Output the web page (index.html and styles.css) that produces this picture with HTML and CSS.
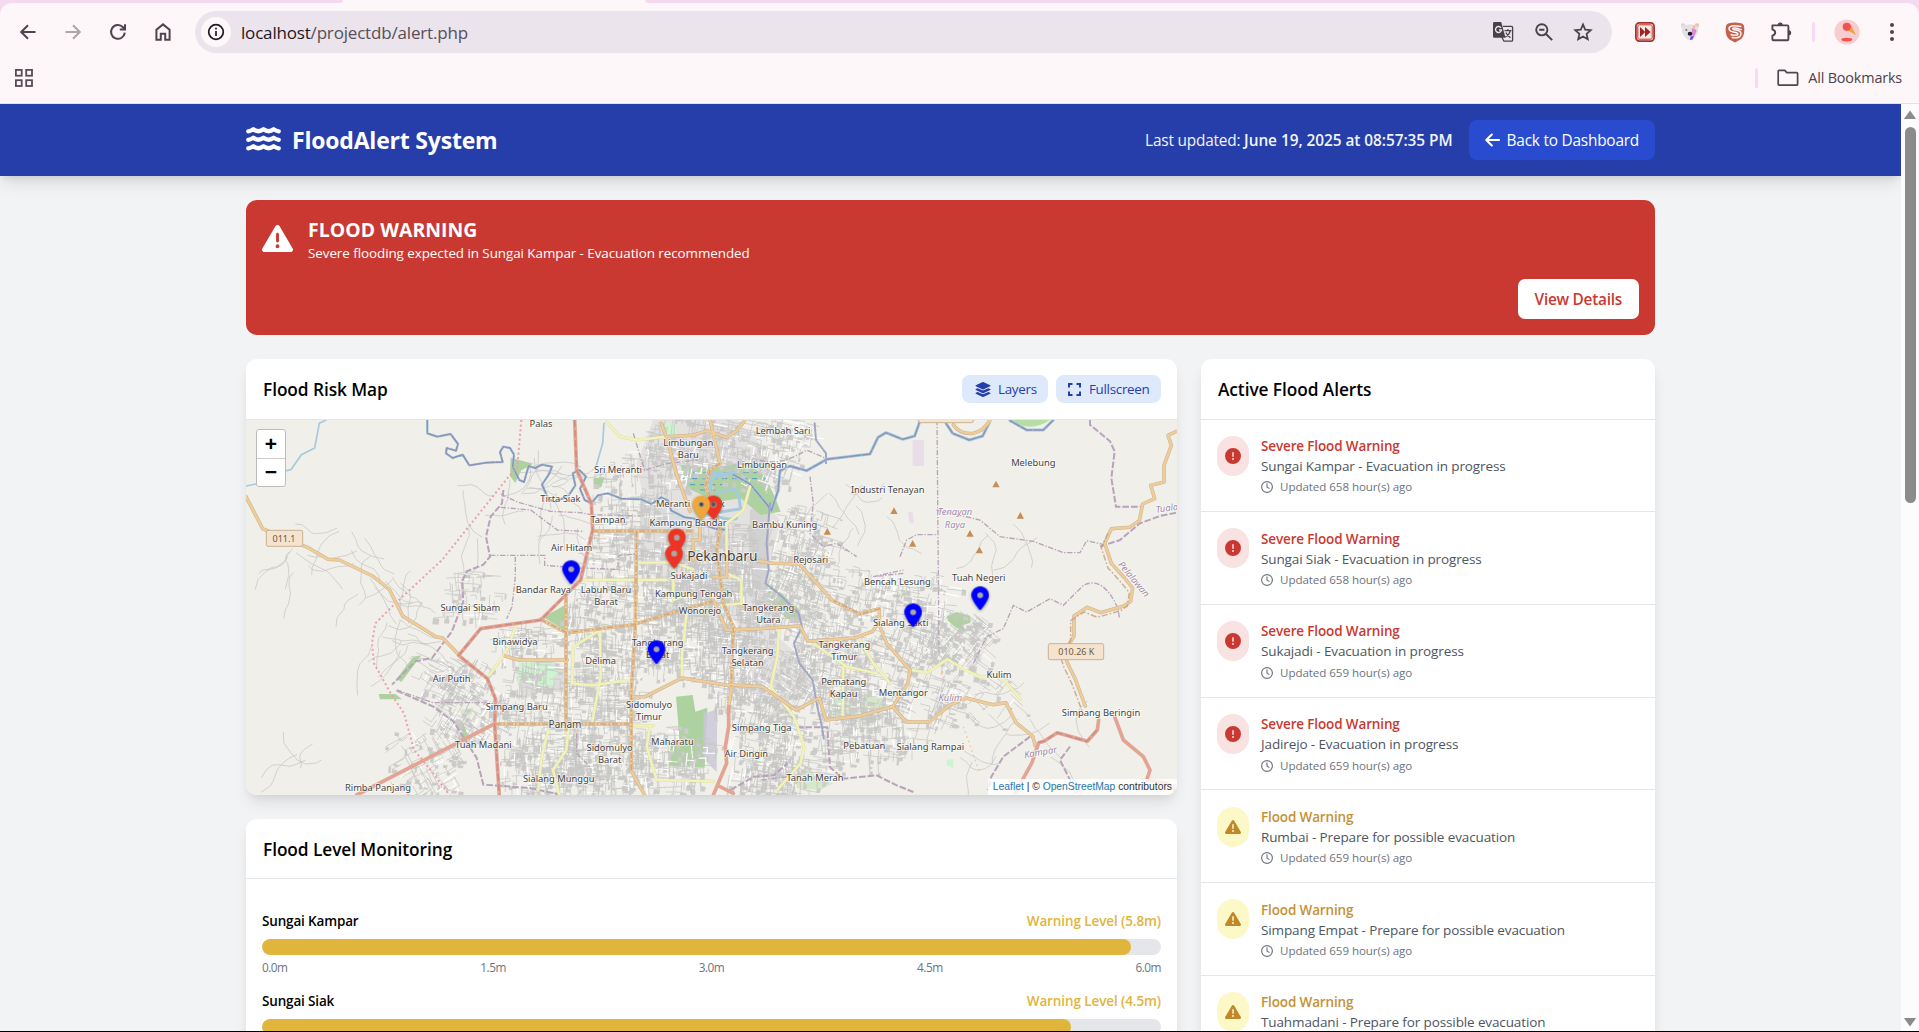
FILE: index.html
```html
<!DOCTYPE html>
<html lang="en">
<head>
<meta charset="utf-8">
<title>FloodAlert System</title>
<link rel="stylesheet" href="styles.css">
</head>
<body>
<svg class="defs" aria-hidden="true">
  <symbol id="i-triangle" viewBox="0 0 512 512"><path d="M256 32c14.2 0 27.3 7.5 34.5 19.8l216 368c7.3 12.4 7.3 27.7 .2 40.1S486.3 480 472 480H40c-14.3 0-27.6-7.7-34.7-20.1s-7-27.8 .2-40.1l216-368C228.7 39.5 241.8 32 256 32zm0 128c-13.3 0-24 10.7-24 24V296c0 13.3 10.7 24 24 24s24-10.7 24-24V184c0-13.3-10.7-24-24-24zm32 224a32 32 0 1 0 -64 0 32 32 0 1 0 64 0z"/></symbol>
  <symbol id="i-circle" viewBox="0 0 512 512"><path d="M256 512A256 256 0 1 0 256 0a256 256 0 1 0 0 512zm0-384c13.3 0 24 10.7 24 24V264c0 13.3-10.7 24-24 24s-24-10.7-24-24V152c0-13.3 10.7-24 24-24zM224 352a32 32 0 1 1 64 0 32 32 0 1 1 -64 0z"/></symbol>
  <symbol id="i-clock" viewBox="0 0 12 12"><g fill="none" stroke="currentColor" stroke-width="1.15" stroke-linecap="round" stroke-linejoin="round"><circle cx="6" cy="6" r="5.4"/><path d="M6 2.9V6l2 1.4"/></g></symbol>
  <symbol id="i-pin" viewBox="0 0 384 512"><circle cx="192" cy="192" r="75" fill="#a9a9a9"/><path d="M215.7 499.2C267 435 384 279.4 384 192C384 86 298 0 192 0S0 86 0 192c0 87.4 117 243 168.3 307.2c12.3 15.3 35.1 15.3 47.4 0zM192 128a64 64 0 1 1 0 128 64 64 0 1 1 0-128z"/></symbol>
</svg>

<div class="browser">
  <div class="tabstrip"><span class="tab-left"></span><span class="tab-active"></span><span class="tab-right"></span></div>
  <div class="toolbar">
    <div class="nav">
      <svg width="20" height="20" viewBox="0 0 20 20"><path d="M17.5 10H3.5M10 3.2 3.2 10l6.8 6.8"/></svg>
      <svg class="off" width="20" height="20" viewBox="0 0 20 20"><path d="M2.5 10h14M10 3.2l6.8 6.8-6.8 6.8"/></svg>
      <svg width="20" height="20" viewBox="0 0 20 20"><path d="M16.8 10.6A6.9 6.9 0 1 1 15 5.2l1.8 1.9M17 2.2v5.2h-5.2"/></svg>
      <svg width="20" height="20" viewBox="0 0 20 20"><path d="M3.4 17.8V7.8L10 2.4l6.6 5.4v10h-4.4v-6H7.8v6z"/></svg>
    </div>
    <div class="omnibox">
      <span class="site-info"><svg width="18" height="18" viewBox="0 0 18 18"><g fill="none" stroke="#1f1a20" stroke-width="1.7"><circle cx="9" cy="9" r="7.3"/><path d="M9 8v5M9 4.8v1.8"/></g></svg></span>
      <span class="url"><b>localhost</b>/projectdb/alert.php</span>
      <svg class="o-translate" width="22" height="22" viewBox="0 0 22 22"><path fill="none" stroke="#494149" stroke-width="1.3" d="M11 5.4h8.6q1 0 1 1v12.8q0 1-1 1H12l-2.2-4"/><path fill="#494149" d="M2.4 1h6.800l4.300 15.800H2.400q-1.400 0-1.400-1.400V2.400Q1 1 2.400 1z"/><path fill="none" stroke="#ebe4ec" stroke-width="1.4" d="M9 6.800A3 3 0 1 0 9.500 9H7"/><path fill="none" stroke="#494149" stroke-width="1.2" d="M12.500 9.600h7M15.900 8v1.600M18.300 9.800q-1 4-5 6.200M13.800 11.600q1.600 3.400 4.600 5"/></svg>
      <svg class="o-zoom" width="20" height="20" viewBox="0 0 20 20"><g fill="none" stroke="#494149" stroke-width="1.9"><circle cx="7.800" cy="7.800" r="5.600"/><path d="M12 12l6.200 6.200M5.200 7.800h5.200"/></g></svg>
      <svg class="o-star" width="20" height="20" viewBox="0 0 20 20"><path fill="none" stroke="#494149" stroke-width="1.7" d="M10 2.400l2.200 5.200 5.600.5-4.200 3.700 1.200 5.500L10 14.400l-4.800 2.900 1.200-5.500-4.200-3.700 5.600-.5z"/></svg>
    </div>
    <div class="ext">
      <svg width="20" height="20" viewBox="0 0 20 20"><rect x=".9" y=".9" width="18.2" height="18.2" rx="3.5" fill="#fff" stroke="#a8322b" stroke-width="1.8"/><rect x="2.8" y="2.8" width="14.4" height="14.4" rx="1.5" fill="#f6e6e4" stroke="#b5342b" stroke-width="1"/><path fill="#9c261f" d="M5 5l5.200 5L5 15zM10 5l5.600 5-5.600 5z"/></svg>
      <svg width="20" height="20" viewBox="0 0 20 20"><circle cx="3.2" cy="3.600" r="2.300" fill="#dcd8da"/><circle cx="16.800" cy="3.600" r="2.300" fill="#ecc0ac"/><path fill="#e4e0e4" d="M2.500 4q7.500-3.500 15 0 2 6-1.500 9.500-2.500 4.500-6 4.500t-6-4.500Q.5 10 2.500 4z"/><path fill="#df8ad6" d="M12 6q4 .6 4.500 3-1 4-3.500 6l-1.500-4z"/><path fill="#6a4be0" d="M10.500 14.500l3.500-.5-1.500 3.500-2.500.5z"/><path fill="#f0a060" d="M13 3.600l2.400.8-1 2z"/><circle cx="6.300" cy="8" r="1" fill="#777"/><ellipse cx="10" cy="11.800" rx="2.300" ry="2" fill="#201b26"/></svg>
      <svg width="20" height="21" viewBox="0 0 20 21"><path fill="#c4604a" d="M4 1.200Q10-.4 16 1.200q3 .8 3.200 4Q20 14 15.500 17.500L10 20.600l-5.500-3.100Q0 14 .8 5.200q.2-3.200 3.200-4z"/><path fill="none" stroke="#fdf7fa" stroke-width="1.5" stroke-linecap="round" d="M15.800 4.600Q4 2.400 4 6.600q0 3 5.500 3.600 3.400.4 3.400 1.900 0 2.200-6.800.6M16.200 7.600Q8 5 7.800 6.700q0 .9 3.200 1.200 5 .6 5 3.900 0 5-8.800 3.600"/></svg>
      <svg width="22" height="22" viewBox="0 0 22 22"><path fill="none" stroke="#4f4350" stroke-width="1.9" stroke-linejoin="round" d="M2.400 4.400h15q1 0 1 1v12.800q0 1-1 1H3.400q-1 0-1-1v-3.600q2.800-.6 2.800-3t-2.800-3z"/><path fill="#4f4350" d="M7.600 4a2.600 2.600 0 0 1 5.200 0zM18.600 9.200a2.600 2.600 0 0 1 0 5.200z"/></svg>
    </div>
    <span class="sep"></span>
    <svg class="avatar" width="26" height="26" viewBox="0 0 26 26"><circle cx="13" cy="13" r="12.600" fill="#f7cdd1"/><path fill="#f0a23c" d="M12.500 10.500l4.500-4.500 4.800 10z"/><circle cx="12.800" cy="7.800" r="4.100" fill="#f0544c"/><ellipse cx="12.800" cy="20.600" rx="5.400" ry="1.900" fill="#f0544c"/></svg>
    <svg class="kebab" width="6" height="20" viewBox="0 0 6 20"><g fill="#4f4350"><circle cx="3" cy="3" r="2"/><circle cx="3" cy="10" r="2"/><circle cx="3" cy="17" r="2"/></g></svg>
  </div>
  <div class="bookmarks">
    <svg width="18" height="18" viewBox="0 0 18 18"><g fill="none" stroke="#574b55" stroke-width="1.8"><rect x=".9" y=".9" width="5.800" height="5.800"/><rect x="11.200" y=".9" width="5.800" height="5.800"/><rect x=".9" y="11.200" width="5.800" height="5.800"/><rect x="11.200" y="11.200" width="5.800" height="5.800"/></g></svg>
    <span class="sep"></span>
    <svg class="folder" width="22" height="18" viewBox="0 0 22 18"><path fill="none" stroke="#4f4750" stroke-width="1.7" stroke-linejoin="round" d="M1.200 2.400q0-1 1-1h5.600l2 2.200h9.800q1 0 1 1v10.600q0 1-1 1H2.200q-1 0-1-1z"/></svg>
    <span class="all">All Bookmarks</span>
  </div>
</div>

<div class="viewport">
  <div class="page">
    <header class="site-header">
      <div class="container header-row">
        <svg class="waves" width="35" height="24" viewBox="0 0 35 24"><g fill="none" stroke="#fff" stroke-width="4.3" stroke-linecap="round" stroke-linejoin="round"><path d="M2.300 4.300q2.400-.3 5-2 5 3.800 10.200 0 5.200 3.800 10.200 0 2.600 1.700 5 2"/><path d="M2.300 12.800q2.400-.3 5-2 5 3.800 10.200 0 5.200 3.800 10.200 0 2.600 1.700 5 2"/><path d="M2.300 21.300q2.400-.3 5-2 5 3.800 10.200 0 5.200 3.800 10.200 0 2.600 1.700 5 2"/></g></svg>
        <h1>FloodAlert System</h1>
        <p class="updated"><span>Last updated:</span> <b>June 19, 2025 at 08:57:35 PM</b></p>
        <a class="back"><svg width="15" height="14" viewBox="0 0 15 14"><path fill="none" stroke="#fff" stroke-width="2.1" stroke-linecap="round" stroke-linejoin="round" d="M14 7H1.500M6.800 1.500 1.300 7l5.500 5.500"/></svg><span>Back to Dashboard</span></a>
      </div>
    </header>

    <main class="container">
      <section class="banner">
        <div class="banner-row">
          <svg class="banner-icon" width="31" height="31"><use href="#i-triangle"/></svg>
          <div><h2>FLOOD WARNING</h2><p>Severe flooding expected in Sungai Kampar - Evacuation recommended</p></div>
        </div>
        <a class="details">View Details</a>
      </section>

      <div class="grid">
        <div class="col">
          <section class="card">
            <div class="card-head">
              <h3>Flood Risk Map</h3>
              <span class="chip"><svg width="16" height="15" viewBox="0 0 512 512"><path d="M12.410 148.020l232.940 105.670c6.800 3.090 14.490 3.090 21.290 0l232.940-105.670c16.550-7.510 16.550-32.520 0-40.030L266.650 2.310a25.607 25.607 0 0 0-21.290 0L12.410 107.980c-16.550 7.510-16.550 32.530 0 40.040zm487.180 88.280l-58.090-26.330-161.640 73.270c-7.560 3.430-15.590 5.170-23.860 5.170s-16.290-1.740-23.860-5.170L70.510 209.970l-58.100 26.330c-16.550 7.500-16.550 32.500 0 40l232.940 105.590c6.800 3.080 14.490 3.080 21.290 0L499.590 276.300c16.550-7.500 16.550-32.500 0-40zm0 127.800l-57.870-26.230-161.860 73.370c-7.560 3.430-15.590 5.170-23.860 5.170s-16.290-1.740-23.860-5.170L70.290 337.870 12.410 364.100c-16.550 7.500-16.550 32.500 0 40l232.940 105.590c6.800 3.080 14.490 3.080 21.290 0L499.590 404.100c16.550-7.500 16.550-32.500 0-40z"/></svg><span class="t-layers">Layers</span></span>
              <span class="chip chip-full"><svg width="13" height="13" viewBox="0 0 13 13"><path fill="none" stroke="currentColor" stroke-width="2" d="M1 4.500V1h3.500M8.500 1H12v3.500M12 8.500V12H8.500M4.500 12H1V8.500"/></svg><span class="t-full">Fullscreen</span></span>
            </div>
            <div class="map">
              <svg class="tiles" viewBox="18 30 2793 1125" preserveAspectRatio="none">
                <rect x="18" y="30" width="2793" height="1125" fill="#f0efea"/>
                <g fill="#dedddd">
                  <path d="M1240 30h250l60 60 40 90-20 90 50 60-30 140 20 130-60 60-100-40-120 20-60-120-80-60 30-140-30-160z" opacity=".7"/>
                  <path d="M1480 440l90-40 20 260 90 80 60 120-160 20-80-60z" opacity=".7"/>
                  <path d="M828 800l60-40 90 10v80l-70-10-60 30z"/>
                  <path d="M1200 250l90 20 60 80-40 60-110-60z"/>
                  <path d="M1530 300l60-20-6 260-60 20z" fill="#d2d2d2"/>
                </g>
                <g fill="#aed1a0">
                  <path d="M812 143l68 18-36 20-18 38-16-20z"/><path d="M1322 165l100 10 90-20 60 40 30 60 20 50-60 10-60-50-70 10-90-40z"/>
                  <path d="M975 585v75l-65-38z"/><path d="M1308 860l50-5 8 50 36-12-8 180-108-6 6-60 26-16-4-60z"/>
                  <path d="M1060 205l34-4-10 30-22 6zM640 930l30 50 20 10-20-50zM520 740l24-4-60 80-14-10zM416 852h50l20 16h-66z"/>
                  <path d="M2120 620l30-14 40 12 2 20-26 8 16 20-36-14-22-20zM2140 725l14 10v30l-20-8zM1590 520l90 80-10 40-40-20-50-60z"/>
                </g>
                <path fill="#b8dea6" d="M2310 30q60 40 120 0z"/>
                <g fill="#cdf3cf"><path d="M836 758l100-4 4 70-56 14-8-24-42 4z"/><circle cx="938" cy="785" r="14"/><path d="M1270 40h40v34h-40zM1660 1060h20v16h-20zM2120 1050l20-4v30l-20-10z"/></g>
                <g fill="#cfe6c0" opacity=".8"><path d="M1770 860l90-20 80 40-40 60-120-10z"/><path d="M1670 1090l40-20 20 40 50 10-40 20-70-6zM660 900l40-8-6 22-26 6z"/></g>
                <path fill="#c9c7d8" d="M1390 900l8 10 34-14-2 190-40-40z" opacity=".8"/>
                <path fill="#e8dde8" d="M2018 90h34v78h-34zM2004 306h14l4 34h-14z"/>
                <path fill="none" stroke="#4f9bc4" stroke-width="3" stroke-dasharray="16 14" d="M1330 188h220M1326 206h250M1350 224h120M1500 168h60M1380 240h60"/>
                <g id="streets"></g>
                <g class="border thin">
                  <path d="M782 252l50 24 100 28 90 4 30 6 150 4M782 292l90 8 80 60 80 4M750 436h164v30l106 8 114 4v-40l60-8M826 440v60l-10 90-16 36M1180 70l24 80 10 30 70-20 90-10"/>
                  <path d="M470 840l110 38h160M1010 970v60l40 40M1560 150q60 20 140-30l70 30M1710 200l10 80-10 90 40 40 40-10 60 40"/>
                  <path d="M2091 30l6 700M2090 300l130 30 60 50 100 14 90 34h50l20-36 60 14M1990 490l-90 10 90-20M1980 440l20-50 30-16h62M1660 1080l-16 20-80 10"/>
                  <path d="M2200 760l40-80 50-24 30-70 40 20 70-40 40 20 60-60q60-30 104 70l4 26"/>
                </g>
                <g class="border">
                  <path d="M790 240l-4 40-34 40-14 60 12 60-20 24-50 20-14 30 4 60-34 90-60 80-50 10-70 70"/>
                  <path d="M470 842l110 48 60 44 70 110 20 80 140 10 90 20"/>
                  <path d="M2550 30v14l60 50 14 30-10 80 14 86h76M2580 410l60-20 60-50 60-22 50-10M1670 952h92l8 120 40 34 100-10 60 30 50 20M2370 980l-80 60-36 60-10 40M2490 1010l-30 40 50 100M1472 1140l70-40 60-4 40-36"/>
                </g>
                <g fill="none" stroke-linejoin="round" stroke-linecap="round">
                  <g stroke="#a5cadd" stroke-width="9">
                    <path d="M258 30l-20 10-14 74-40 20-30 44-22 6M18 228l30-6M1092 40l-4 60-20 70" stroke-width="5"/>
                    <path d="M562 30v40l30 10 40-8 22 30-6 20-28-8-2 16 20 14 30-10 20 32 50-8 50-2-8-30 10-16 20 4 12 20-4 36 20 40 14 6 14-48 20 6 20-10 30 6-10 24-20 30 20 44 20 8 40-20 20-30-8-36 20-10 20 20-18 36 14 34 20 10 20-24 30-6 40 16 60 2 30 14 30-20 20 10 10 30 40 20 30 4 20 16 40 14 40 4" stroke-width="7"/>
                    <path d="M1370 290l40 24 60 16 20-6M1420 190l60 4 50 28 50 60 14 20 20-60 6-60 30-14 50 14 60-34 130-16 24-50 24-14 50 20 36-10 20-56M1410 240l4-34 70-20M1430 250l50-14 16 20 6 40-60 10-30-10M2118 40l20 30 50 20 40-12 20-40M2310 32l50 28h50l30-30"/>
                  </g>
                  <path stroke="#8c93b4" stroke-width="4.5" stroke-dasharray="34 5" d="M562 30v40l30 10 40-8 22 30-6 20-28-8-2 16 20 14 30-10 20 32 50-8 50-2-8-30 10-16 20 4 12 20-4 36 20 40 14 6 14-48 20 6 20-10 30 6-10 24-20 30 20 44 20 8 40-20 20-30-8-36 20-10 20 20-18 36 14 34 20 10 20-24 30-6 40 16 60 2 30 14 30-20 20 10 10 30 40 20 30 4 20 16 40 14 40 4M1480 194l50 28 50 60 14 20 20-60 6-60 30-14 50 14 60-34 130-16 24-50 24-14 50 20 36-10 20-56M2118 40l20 30 50 20 40-12 20-40M2310 32l50 28h50l30-30"/>
                  <path stroke="#a0a6c4" stroke-width="6" stroke-dasharray="24 5" d="M1724 40l4 50 30 40v30M1590 280l-10 120 6 80-10 40 50 40 50 50 10 40-24 50 16 60 40 50 14 80 14 60 6 40"/>
                </g>
                <path class="pinkline" d="M844 30l-12 140-26 30-200 250-140 130-60 60-10 60 6 60 50 90 40 60 30 110 50 60 60 80"/>
                <path d="M2170 950l50 140M2106 770l6 60" fill="none" stroke="#f4c890" stroke-width="4" stroke-dasharray="5 10"/>
                <g class="road yellow-c"><path d="M1020 510h260M1190 458h110l60 20M1080 660l-80 50-4 110 60 6 110-16M1080 660l2 140-26 140M828 646l-30 80-50 70M1340 610l-14 120v70M925 960l-20 80-10 100M985 960l-6 60-40 60 20 80M1230 950l-10 60 30 100 170 4M1100 36l40 44 50 10 90-10M1530 230l-20 70-50 40v150l44 20v70l-60 6M1618 650l-6 90-20 90 70 90 30 90-10 50-70 80M1860 690l40 70 50 60 M1810 770l-2 150M2012 780l50 8 60-40 50 30 50 24 60-4 60 70M1300 480v90l50-20M1180 947h60M1720 700l100 70 90 20"/></g>
                <g class="road yellow"><path d="M1020 510h260M1190 458h110l60 20M1080 660l-80 50-4 110 60 6 110-16M1080 660l2 140-26 140M828 646l-30 80-50 70M1340 610l-14 120v70M925 960l-20 80-10 100M985 960l-6 60-40 60 20 80M1230 950l-10 60 30 100 170 4M1100 36l40 44 50 10 90-10M1530 230l-20 70-50 40v150l44 20v70l-60 6M1618 650l-6 90-20 90 70 90 30 90-10 50-70 80M1860 690l40 70 50 60 M1810 770l-2 150M2012 780l50 8 60-40 50 30 50 24 60-4 60 70M1300 480v90l50-20M1180 947h60M1720 700l100 70 90 20"/></g>
                <g class="road orange-c"><path d="M18 260l50 96 80 34 54 22 62 36 34 2 100 48 50 40 40 80 100 62 20 4 50 52M902 628l78 40 200-24 130-40 110-30M1058 363h300M1190 363l-4 280-12 200v240l40 72M796 738l40 12h146M978 560v400M766 942h408M1176 860h40l110-56 150 24M1264 40l16 44 30 110 40 110M1280 80l80-4 40-14 60 20 30-20 24-30M1410 30l30 130-30 20-14 50 24 50 20 80-10 60 20 160 30 70-6 180-10 80M1420 570l40 90 100-4 120-8 24 46 140-10 54-20 20-30V596l-60 16-80-40-100-110-80-2-60-10M1920 650l20 50 70 80-6 40-46 70-100 28-100 12-20-66-70 36-100-70-100-6M1958 890l40 46h70l60-50 50-22 80 20 40-6 30 60 50 40 8 30M2810 64l-26 12 10 30-22 60v50l-40 10 12 40-36 16-10 50-30 20-54 4-20 44 20 60 40 44 24 30-6 40-20 14-70 20-40-16-40 26v60l-30 50 10 30 24 50 30 80M2140 44q20 30 60 26 30-6 50-40M1380 330v60h-20v60M1420 500h40v-60"/></g>
                <g class="road orange"><path d="M18 260l50 96 80 34 54 22 62 36 34 2 100 48 50 40 40 80 100 62 20 4 50 52M902 628l78 40 200-24 130-40 110-30M1058 363h300M1190 363l-4 280-12 200v240l40 72M796 738l40 12h146M978 560v400M766 942h408M1176 860h40l110-56 150 24M1264 40l16 44 30 110 40 110M1280 80l80-4 40-14 60 20 30-20 24-30M1410 30l30 130-30 20-14 50 24 50 20 80-10 60 20 160 30 70-6 180-10 80M1420 570l40 90 100-4 120-8 24 46 140-10 54-20 20-30V596l-60 16-80-40-100-110-80-2-60-10M1920 650l20 50 70 80-6 40-46 70-100 28-100 12-20-66-70 36-100-70-100-6M1958 890l40 46h70l60-50 50-22 80 20 40-6 30 60 50 40 8 30M2810 64l-26 12 10 30-22 60v50l-40 10 12 40-36 16-10 50-30 20-54 4-20 44 20 60 40 44 24 30-6 40-20 14-70 20-40-16-40 26v60l-30 50 10 30 24 50 30 80M2140 44q20 30 60 26 30-6 50-40M1380 330v60h-20v60M1420 500h40v-60"/></g>
                <path class="road-dash" d="M902 628l78 40 200-24 130-40 110-30M1058 363h300M1190 363l-4 280-12 200v240M978 560v400M766 942h408M1440 160l-30 20-14 50 24 50 20 80-10 60 20 160 30 70-6 180M2604 370l-20 44 20 60 40 44 24 30-6 40-20 14-70 20-40-16-40 26v60l-30 50 10 30 24 50 30 80M1920 596l-60 16-80-40"/>
                <g class="road trunk"><path d="M1004 30l6 150 44 100 4 80-36 150-120 120-180 26-66 80 86 70 24 60-2 80 14 210M762 942L350 1155M1466 890v60l-10 60 4 50-40 95M2576 930l-4 30-30 34-90-26-40 26-16 4-20 60-50 90M2624 920l26 70 60 50 20 40-10 30 60 10 40 35M1440 1130l40 20"/></g>
                <path d="M1004 30l6 150 44 100 4 80-36 150-120 120-180 26-66 80 86 70 24 60-2 80 14 210M2395 998l16-4 40-26 90 26 30-34" fill="none" stroke="#c48580" stroke-width="5" stroke-dasharray="22 8" opacity=".7"/>
                <g fill="#c98d54"><path d="M2268 212l11 20h-22zM1962 292l11 20h-22zM2341 306l11 20h-22zM1762 354l11 20h-22zM2190 360l11 20h-22zM2018 390l11 20h-22zM2218 410l11 20h-22z"/></g>
                <g fill="#f5e3cf" stroke="#cbb392" stroke-width="3"><rect x="79" y="361" width="109" height="48" rx="5"/><rect x="2425" y="701" width="166" height="48" rx="5"/><rect x="2036" y="-10" width="164" height="48" rx="5"/></g>
                <g class="lbl shield"><text x="132" y="396">011.1</text><text x="2509" y="735">010.26 K</text></g>
                <g class="lbl">
                  <text x="903" y="50">Palas</text><text x="1345" y="107">Limbungan</text><text x="1345" y="143">Baru</text><text x="1134" y="189">Sri Meranti</text><text x="961" y="277">Tirta Siak</text><text x="1104" y="339">Tampan</text><text x="1299" y="291">Meranti</text><text x="1438" y="291">uk</text><text x="1344" y="348">Kampung Bandar</text><text x="995" y="424">Air Hitam</text><text x="1347" y="506">Sukajadi</text><text x="910" y="548">Bandar Raya</text><text x="1098" y="548">Labuh Baru</text><text x="1098" y="584">Barat</text><text x="1361" y="562">Kampung Tengah</text><text x="691" y="604">Sungai Sibam</text><text x="1380" y="613">Wonorejo</text><text x="825" y="705">Binawidya</text><text x="1253" y="707">Tangkerang</text><text x="1253" y="743">Barat</text><text x="1082" y="762">Delima</text><text x="635" y="815">Air Putih</text><text x="830" y="899">Simpang Baru</text><text x="975" y="955" class="mid">Panam</text><text x="1227" y="893">Sidomulyo</text><text x="1227" y="929">Timur</text><text x="1297" y="1005">Maharatu</text><text x="730" y="1015">Tuah Madani</text><text x="1109" y="1023">Sidomulyo</text><text x="1109" y="1059">Barat</text><text x="956" y="1116">Sialang Munggu</text><text x="414" y="1143">Rimba Panjang</text><text x="1315" y="1176">Perhentian</text>
                  <text x="1447" y="452" class="city">Pekanbaru</text>
                </g>
                <g class="lbl" transform="translate(1380 0)">
                  <text x="249" y="72">Lembah Sari</text><text x="186" y="174">Limbungan</text><text x="563" y="248">Industri Tenayan</text><text x="1000" y="167">Melebung</text><text x="254" y="353">Bambu Kuning</text><text x="332" y="458">Rejosari</text><text x="592" y="524">Bencah Lesung</text><text x="836" y="514">Tuah Negeri</text><text x="205" y="604">Tangkerang</text><text x="205" y="640">Utara</text><text x="602" y="648">Sialang Sakti</text><text x="433" y="713">Tangkerang</text><text x="433" y="749">Timur</text><text x="143" y="732">Tangkerang</text><text x="143" y="768">Selatan</text><text x="431" y="826">Pematang</text><text x="431" y="862">Kapau</text><text x="610" y="859">Mentangor</text><text x="897" y="803">Kulim</text><text x="1203" y="919">Simpang Beringin</text><text x="185" y="962">Simpang Tiga</text><text x="493" y="1018">Pebatuan</text><text x="691" y="1020">Sialang Rampai</text><text x="139" y="1042">Air Dingin</text><text x="345" y="1113">Tanah Merah</text>
                  <g class="area"><text x="765" y="316">Tenayan</text><text x="765" y="353">Raya</text><text x="751" y="872">Kulim</text><text x="1022" y="1036" transform="rotate(-10 1022 1030)">Kampar</text><text x="1402" y="304" transform="rotate(-8 1402 304)">Tuala</text><text x="1296" y="520" transform="rotate(50 1302 515)">Pelalawan</text></g>
                </g>
                <g class="pins">
                  <use href="#i-pin" x="1394" y="257" width="53" height="71" fill="#ee3323"/><use href="#i-pin" x="1358" y="257" width="53" height="71" fill="#f1a735"/>
                  <use href="#i-pin" x="1284" y="356" width="53" height="71" fill="#ee3323"/><use href="#i-pin" x="1276" y="404" width="53" height="71" fill="#ee3323"/>
                  <use href="#i-pin" x="967" y="451" width="53" height="71" fill="#00f"/><use href="#i-pin" x="1223" y="691" width="53" height="71" fill="#00f"/>
                  <use href="#i-pin" x="1993" y="580" width="53" height="71" fill="#00f"/><use href="#i-pin" x="2194" y="529" width="53" height="71" fill="#00f"/>
                  <circle cx="1384" cy="283" r="6" fill="#444"/><circle cx="1420" cy="283" r="7" fill="#555"/>
                </g>
              </svg>
              <div class="zoomctl"><span>+</span><span>−</span></div>
              <div class="attrib"><a>Leaflet</a> | © <a>OpenStreetMap</a> contributors</div>
            </div>
          </section>

          <section class="card levels">
            <div class="card-head"><h3>Flood Level Monitoring</h3></div>
            <div class="levels-body">
              <div class="level">
                <div class="level-top"><span class="l-name">Sungai Kampar</span><span class="l-warn">Warning Level (5.8m)</span></div>
                <div class="track"><div class="fill" style="width:96.67%"></div></div>
                <div class="scale"><span>0.0m</span><span>1.5m</span><span>3.0m</span><span>4.5m</span><span>6.0m</span></div>
              </div>
              <div class="level">
                <div class="level-top"><span class="l-name">Sungai Siak</span><span class="l-warn">Warning Level (4.5m)</span></div>
                <div class="track"><div class="fill" style="width:90%"></div></div>
              </div>
            </div>
          </section>
        </div>

        <section class="card alerts">
          <div class="card-head"><h3>Active Flood Alerts</h3></div>
          <ul>
            <li class="sev"><span class="badge"><svg width="16" height="16"><use href="#i-circle"/></svg></span><div><h4>Severe Flood Warning</h4><p>Sungai Kampar - Evacuation in progress</p><small><svg width="12" height="12"><use href="#i-clock"/></svg>Updated 658 hour(s) ago</small></div></li>
            <li class="sev"><span class="badge"><svg width="16" height="16"><use href="#i-circle"/></svg></span><div><h4>Severe Flood Warning</h4><p>Sungai Siak - Evacuation in progress</p><small><svg width="12" height="12"><use href="#i-clock"/></svg>Updated 658 hour(s) ago</small></div></li>
            <li class="sev"><span class="badge"><svg width="16" height="16"><use href="#i-circle"/></svg></span><div><h4>Severe Flood Warning</h4><p>Sukajadi - Evacuation in progress</p><small><svg width="12" height="12"><use href="#i-clock"/></svg>Updated 659 hour(s) ago</small></div></li>
            <li class="sev"><span class="badge"><svg width="16" height="16"><use href="#i-circle"/></svg></span><div><h4>Severe Flood Warning</h4><p>Jadirejo - Evacuation in progress</p><small><svg width="12" height="12"><use href="#i-clock"/></svg>Updated 659 hour(s) ago</small></div></li>
            <li class="warn"><span class="badge"><svg width="16" height="16"><use href="#i-triangle"/></svg></span><div><h4>Flood Warning</h4><p>Rumbai - Prepare for possible evacuation</p><small><svg width="12" height="12"><use href="#i-clock"/></svg>Updated 659 hour(s) ago</small></div></li>
            <li class="warn"><span class="badge"><svg width="16" height="16"><use href="#i-triangle"/></svg></span><div><h4>Flood Warning</h4><p>Simpang Empat - Prepare for possible evacuation</p><small><svg width="12" height="12"><use href="#i-clock"/></svg>Updated 659 hour(s) ago</small></div></li>
            <li class="warn"><span class="badge"><svg width="16" height="16"><use href="#i-triangle"/></svg></span><div><h4>Flood Warning</h4><p>Tuahmadani - Prepare for possible evacuation</p></div></li>
          </ul>
        </section>
      </div>
    </main>
  </div>
  <div class="scrollbar"><svg width="14" height="10" viewBox="0 0 12 9"><path d="M6 .5 11.500 8H.5z"/></svg><span class="thumb"></span><svg width="14" height="10" viewBox="0 0 12 9"><path d="M.5 1h11L6 8.500z"/></svg></div>
</div>
<script src="streets.js"></script>
</body>
</html>
```
FILE: styles.css
```css
* { box-sizing: border-box; margin: 0; padding: 0; }
body { width: 1919px; height: 1032px; overflow: hidden; display: flex; flex-direction: column; font-family: "Open Sans", "Noto Sans", sans-serif; color: #000; background: #f2f3f5; border-bottom: 1px solid #000; }
svg { display: block; flex: none; }
.defs { display: none; }
h1, h2, h3, h4, p, span, a, small { white-space: nowrap; }

/* browser chrome */
.browser { flex: none; height: 104px; background: linear-gradient(#f3daee, #f3daee) top / 100% 15px no-repeat, #fdf7fa; border-bottom: 1px solid #e9dde6; }
.tabstrip { display: flex; height: 3px; background: #fdf7fa; }
.tab-left { width: 343px; background: #f3daee; border-radius: 0 0 8px 0; }
.tab-active { width: 302px; }
.tab-right { flex: 1; background: #f3daee; border-radius: 0 0 0 8px; }
.toolbar { height: 58px; display: flex; align-items: center; padding: 0 24px 0 18px; border-radius: 12px 12px 0 0; background: #fdf7fa; }
.nav { display: flex; gap: 25px; width: 177px; }
.nav path { fill: none; stroke: #4f4350; stroke-width: 2; }
.nav .off { opacity: .45; }
.omnibox { width: 1417px; height: 42px; border-radius: 21px; background: #ebe4ec; display: flex; align-items: center; padding: 0 19px 0 6px; }
.site-info { width: 30px; height: 30px; border-radius: 50%; background: #fdf7fa; display: grid; place-items: center; }
.url { flex: 1; margin-left: 10px; font-size: 17px; letter-spacing: -.18px; color: #574e58; }
.url b { font-weight: 400; color: #1c171d; }
.o-zoom { margin-left: 20px; }
.o-star { margin-left: 19px; }
.ext { display: flex; align-items: center; gap: 25px; margin-left: 23px; }
.sep { width: 3px; height: 20px; border-radius: 2px; background: #f9d9f4; }
.toolbar .sep { margin-left: 20px; }
.avatar { margin-left: 19px; }
.kebab { margin-left: 29px; }
.bookmarks { display: flex; align-items: center; height: 34px; padding: 0 17px 0 15px; }
.bookmarks .sep { margin-left: auto; }
.folder { margin-left: 19px; }
.all { margin-left: 9px; padding-bottom: 2px; font-size: 14.4px; letter-spacing: -.17px; color: #4a414b; }

/* page */
.viewport { flex: 1; min-height: 0; display: flex; }
.page { width: 1901px; overflow: hidden; }
.container { width: 1409px; margin: 0 auto; }
.site-header { height: 72px; background: #263ea9; box-shadow: 0 10px 15px -3px rgba(0,0,0,.1), 0 4px 6px -2px rgba(0,0,0,.08); }
.header-row { height: 72px; display: flex; align-items: center; color: #fff; }
.waves { margin-right: 11px; margin-bottom: 2px; }
h1 { font-size: 23px; line-height: 32px; font-weight: 700; letter-spacing: -.2px; }
.updated { margin-left: auto; padding-top: 1px; font-size: 15.4px; line-height: 24px; letter-spacing: -.2px; color: #f1f4ff; }
.updated b { font-weight: 600; letter-spacing: -.05px; }
.back { display: flex; align-items: center; gap: 7px; height: 40px; margin-left: 16px; padding: 0 16px; border-radius: 8px; background: #294bcf; font-size: 15.4px; letter-spacing: -.22px; }
.back span { padding-top: 1px; }

.banner { display: flex; flex-direction: column; height: 135px; margin-top: 24px; padding: 16px; border-radius: 11px; background: #c93931; color: #fff; }
.banner-row { display: flex; gap: 15px; }
.banner-icon { fill: #fff; margin-top: 7px; }
.banner h2 { font-size: 19.4px; line-height: 28px; font-weight: 700; letter-spacing: .05px; }
.banner p { margin-top: -1px; font-size: 13.4px; line-height: 20px; letter-spacing: -.05px; }
.details { align-self: flex-end; margin-top: auto; height: 40px; padding: 1px 17px 0; border-radius: 7px; background: #fff; color: #c93931; font-size: 15.4px; line-height: 40px; font-weight: 600; letter-spacing: -.26px; }

.grid { display: grid; grid-template-columns: 931px 454px; gap: 24px; margin-top: 24px; align-items: start; }
.col { display: grid; gap: 24px; }
.card { background: #fff; border-radius: 11px; box-shadow: 0 10px 15px -3px rgba(0,0,0,.1), 0 4px 6px -2px rgba(0,0,0,.05); }
.card-head { display: flex; align-items: center; gap: 8px; height: 61px; padding: 0 16px; border-bottom: 1px solid #e5e6e9; }
.card-head h3 { margin-right: auto; padding: 2px 0 0 1px; font-size: 17.3px; line-height: 28px; font-weight: 600; letter-spacing: -.07px; }
.levels .card-head { height: 60px; }
.chip { display: flex; align-items: center; gap: 7px; width: 86px; height: 28px; padding-left: 13px; border-radius: 8px; background: #dfe9fc; color: #263ea9; fill: #263ea9; font-size: 13.4px; letter-spacing: -.3px; }
.chip-full { width: 105px; padding-left: 12px; gap: 8px; }

.map { position: relative; height: 375px; border-radius: 0 0 11px 11px; overflow: hidden; }
.tiles { width: 931px; height: 375px; }
.tiles .road { fill: none; stroke-linejoin: round; stroke-linecap: round; }
.yellow-c { stroke: #d9d9ae; stroke-width: 9; }
.yellow { stroke: #f2f3b8; stroke-width: 7; }
.orange-c { stroke: #cfb08a; stroke-width: 10.5; }
.orange { stroke: #edcd9c; stroke-width: 7.5; }
.road-dash { fill: none; stroke: #c39a78; stroke-width: 4.5; stroke-dasharray: 18 6 5 6; opacity: .75; }
.trunk { stroke: #e3a494; stroke-width: 11; }
.border { fill: none; stroke: #b9a3ba; stroke-width: 6; stroke-dasharray: 20 6; }
.border.thin { stroke-width: 4; stroke-dasharray: 16 5 4 5; }
.pinkline { fill: none; stroke: #eba0ad; stroke-width: 6; stroke-dasharray: 6 8; }
.lbl { font-family: "Noto Sans", sans-serif; font-size: 28px; text-anchor: middle; fill: #424242; paint-order: stroke; stroke: rgba(255,255,255,.75); stroke-width: 5px; stroke-linejoin: round; }
.shield { fill: #6b5a42; stroke: none; font-size: 27px; }
.city { font-size: 41.5px; }
.mid { font-size: 30px; }
.area { fill: #a487a8; font-style: italic; }
.pins { filter: drop-shadow(0 3px 5px rgba(0,0,0,.4)); }
.zoomctl { position: absolute; left: 10px; top: 9px; width: 30px; border: 1px solid #bdbcb8; border-radius: 3px; background: #fff; overflow: hidden; }
.zoomctl span { display: block; height: 28px; font: 700 21px/28px "Liberation Sans", Arial, sans-serif; text-align: center; }
.zoomctl span + span { border-top: 1px solid #ccc; line-height: 25px; }
.attrib { position: absolute; right: 0; bottom: 0; height: 16px; padding: 0 5px; background: rgba(255,255,255,.8); font: 10.3px/16px "Liberation Sans", Arial, sans-serif; color: #333; }
.attrib a { color: #2878a8; }

.levels { height: 300px; }
.levels-body { padding: 32px 16px; display: grid; gap: 16px; }
.level-top { display: flex; justify-content: space-between; font-size: 13.5px; line-height: 20px; font-weight: 600; margin-bottom: 8px; }
.l-name { letter-spacing: -.16px; }
.l-warn { color: #e1b43c; letter-spacing: -.1px; }
.track { height: 16px; border-radius: 8px; background: #e5e6ea; overflow: hidden; }
.fill { height: 16px; border-radius: 8px; background: #e1b43c; }
.scale { display: flex; justify-content: space-between; margin-top: 4px; font-size: 11.8px; line-height: 16px; letter-spacing: -.5px; color: #6d7480; }

.alerts { height: 900px; }
.alerts ul { list-style: none; margin-top: -.75px; }
.alerts li { display: flex; gap: 12px; height: 92.75px; padding: 16.3px 16px 0; border-bottom: 1px solid #e5e6e9; }
.badge { width: 32px; height: 40px; border-radius: 16px; display: grid; place-items: center; }
.alerts h4 { padding-top: .3px; font-size: 13.5px; line-height: 20px; font-weight: 600; letter-spacing: -.14px; }
.alerts p { font-size: 13.5px; line-height: 20px; letter-spacing: -.12px; color: #4d5562; }
.alerts small { display: flex; align-items: center; gap: 7px; margin-top: 3.5px; font-size: 11.6px; line-height: 16px; letter-spacing: -.07px; color: #6d7480; }
.sev .badge { background: #f8e2e2; fill: #c93931; }
.sev h4 { color: #c93931; }
.warn .badge { background: #fdf8c8; fill: #c1882b; }
.warn h4 { color: #c49134; }

.scrollbar { width: 18px; background: #fcfcfc; display: flex; flex-direction: column; align-items: center; padding: 6px 0 4px; fill: #8b8b8b; }
.scrollbar .thumb { width: 11px; height: 376px; margin: 7px 0 auto; border-radius: 6px; background: #8b8b8b; }
```
FILE: streets.js
```
// Minor streets and building blocks, laid out per district with a seeded generator.
let seed = 7;
function rnd() { seed = (seed * 16807) % 2147483647; return seed / 2147483647; }

// cx, cy, rx, ry, street count, base angle in degrees
const districts = [
  [1340, 110, 130, 110, 150, 10], [1180, 230, 130, 110, 100, 0], [1130, 420, 100, 90, 110, 0],
  [1090, 600, 110, 110, 150, 5], [1290, 480, 100, 120, 200, 0], [1290, 660, 110, 110, 200, 0],
  [1430, 440, 110, 130, 230, 0], [1480, 620, 120, 110, 210, 5], [1460, 780, 90, 120, 150, 0],
  [1090, 800, 120, 120, 200, 0], [1080, 1020, 140, 130, 260, 0], [1280, 1050, 130, 100, 150, 0],
  [880, 860, 100, 110, 130, 5], [900, 1060, 130, 100, 190, 0], [690, 900, 110, 90, 120, 30],
  [650, 800, 110, 70, 90, 30], [560, 1050, 110, 100, 80, 60], [680, 560, 90, 80, 50, 0],
  [870, 690, 110, 60, 70, 0], [1570, 70, 160, 60, 100, 10], [1570, 170, 110, 50, 60, 20],
  [1680, 400, 100, 130, 140, 15], [1640, 560, 110, 100, 140, 20], [1840, 540, 150, 80, 100, 10],
  [1780, 720, 130, 90, 180, 10], [1840, 860, 130, 80, 190, 5], [1620, 800, 110, 100, 150, 30],
  [1570, 960, 110, 130, 180, 10], [1620, 1090, 160, 70, 130, 5], [1880, 980, 150, 70, 120, 0],
  [2050, 850, 110, 110, 90, 20], [2050, 600, 90, 120, 90, 10], [2160, 690, 100, 90, 140, 40],
  [1960, 720, 90, 90, 60, 20], [2230, 850, 110, 80, 32, 40], [370, 370, 90, 80, 7, 60],
  [170, 440, 60, 50, 6, 40], [430, 520, 110, 60, 9, 50], [470, 700, 80, 80, 14, 20],
  [850, 330, 180, 100, 8, 0], [740, 200, 180, 60, 4, 0], [1860, 280, 110, 80, 8, 40],
  [2330, 330, 140, 70, 4, 50], [2400, 900, 160, 90, 6, 50], [220, 1000, 150, 70, 4, 60],
  [930, 200, 110, 90, 12, 0], [2300, 1050, 160, 60, 4, 30]
];

let grey = '', white = '', blocks = '';
for (const [cx, cy, rx, ry, count, base] of districts) {
  for (let i = 0; i < count; i++) {
    const t = rnd() * 6.283, r = Math.sqrt(rnd());
    let x = cx + Math.cos(t) * rx * r, y = cy + Math.sin(t) * ry * r;
    const sparse = count < 32;
    let a = (base + (rnd() < .5 ? 0 : 90) + (rnd() - .5) * 14) * Math.PI / 180;
    let d = 'M' + x.toFixed(0) + ' ' + y.toFixed(0);
    const steps = sparse ? 6 : 2;
    for (let s = 0; s < steps; s++) {
      const len = (sparse ? 12 : 10) + rnd() * 24;
      x += Math.cos(a) * len; y += Math.sin(a) * len;
      d += 'L' + x.toFixed(0) + ' ' + y.toFixed(0);
      a += sparse ? (rnd() - .5) * 1.2 : (rnd() < .4 ? 1.57 : 0);
    }
    if (!sparse && rnd() < .13) white += d; else grey += d;
    if (!sparse && rnd() < .5) {
      const w = 5 + rnd() * 14, h = 5 + rnd() * 13;
      blocks += 'M' + x.toFixed(0) + ' ' + y.toFixed(0) + 'l' + w.toFixed(0) + ' 2l-2 ' + h.toFixed(0) + 'l' + (-w).toFixed(0) + ' -1z';
    }
  }
}
document.getElementById('streets').innerHTML =
  '<path d="' + blocks + '" fill="#cdcccb"/>' +
  '<path d="' + white + '" fill="none" stroke="#fff" stroke-width="3.6"/>' +
  '<path d="' + grey + '" fill="none" stroke="#c6c5c4" stroke-width="2.2"/>';
```
